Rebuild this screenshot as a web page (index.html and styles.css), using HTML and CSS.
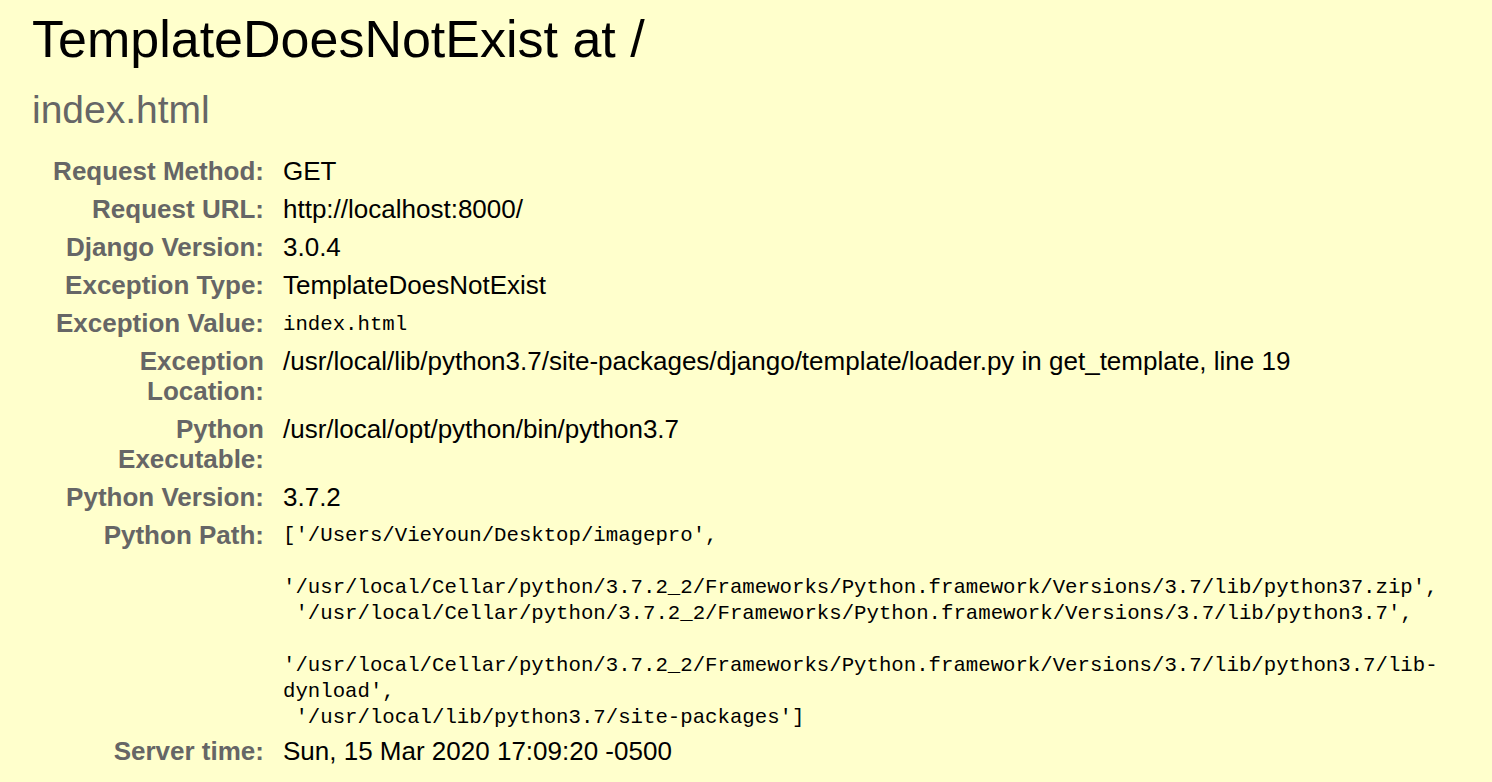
FILE: index.html
```html
<!DOCTYPE html>
<html lang="en">
<head>
<meta charset="utf-8">
<title>TemplateDoesNotExist at /</title>
<link rel="stylesheet" href="styles.css">
</head>
<body>
<div class="summary">
  <h1 class="title">TemplateDoesNotExist at /</h1>
  <h2 class="subtitle">index.html</h2>
  <table class="meta">
    <tr><th>Request Method:</th><td>GET</td></tr>
    <tr><th>Request URL:</th><td>http://localhost:8000/</td></tr>
    <tr><th>Django Version:</th><td>3.0.4</td></tr>
    <tr><th>Exception Type:</th><td>TemplateDoesNotExist</td></tr>
    <tr><th>Exception Value:</th><td><pre class="code one">index.html</pre></td></tr>
    <tr><th>Exception Location:</th><td>/usr/local/lib/python3.7/site-packages/django/template/loader.py in get_template, line 19</td></tr>
    <tr><th>Python Executable:</th><td>/usr/local/opt/python/bin/python3.7</td></tr>
    <tr><th>Python Version:</th><td>3.7.2</td></tr>
    <tr><th>Python Path:</th><td><pre class="code">['/Users/VieYoun/Desktop/imagepro',
 
'/usr/local/Cellar/python/3.7.2_2/Frameworks/Python.framework/Versions/3.7/lib/python37.zip',
 '/usr/local/Cellar/python/3.7.2_2/Frameworks/Python.framework/Versions/3.7/lib/python3.7',
 
'/usr/local/Cellar/python/3.7.2_2/Frameworks/Python.framework/Versions/3.7/lib/python3.7/lib-
dynload',
 '/usr/local/lib/python3.7/site-packages']</pre></td></tr>
    <tr><th>Server time:</th><td>Sun, 15 Mar 2020 17:09:20 -0500</td></tr>
  </table>
</div>
</body>
</html>
```
FILE: styles.css
```css
html, body {
  margin: 0;
  padding: 0;
}
body {
  background: #ffffcc;
  color: #000;
  font-family: "Liberation Sans", Arial, Helvetica, sans-serif;
  font-size: 26px;
}
.summary {
  padding: 9px 40px 0 32px;
}
.title {
  margin: 0;
  font-size: 52px;
  line-height: 60px;
  font-weight: normal;
}
.subtitle {
  margin: 18px 0 0 0;
  font-size: 39px;
  line-height: 46px;
  font-weight: normal;
  color: #666;
}
.meta {
  margin: 19px 0 0 8px;
  border-collapse: collapse;
  border: none;
  table-layout: fixed;
  width: calc(100% - 8px);
}
.meta th,
.meta td {
  vertical-align: top;
  line-height: 30px;
  padding: 4px 6px;
}
.meta th {
  width: 218px;
  padding-right: 13px;
  text-align: right;
  color: #666;
  font-weight: bold;
}
.meta td {
  color: #000;
}
.code {
  margin: 3px 0 -3px 0;
  font-family: "Liberation Mono", "Courier New", monospace;
  font-size: 20.7px;
  line-height: 26px;
  white-space: pre;
}
.code.one {
  line-height: 30px;
  margin: 2px 0 -2px 0;
}
```
